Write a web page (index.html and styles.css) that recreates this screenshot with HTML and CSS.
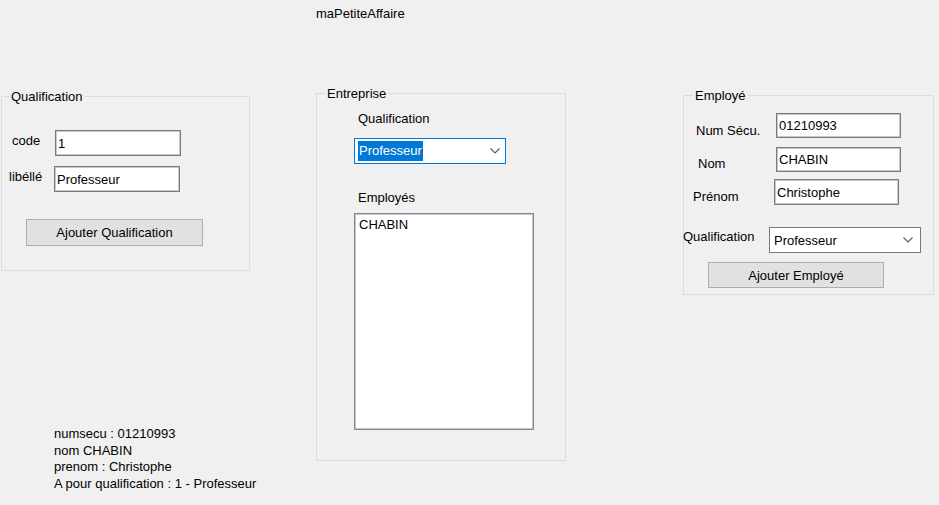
FILE: index.html
```html
<!DOCTYPE html>
<html lang="fr">
<head>
<meta charset="utf-8">
<title>maPetiteAffaire</title>
<link rel="stylesheet" href="styles.css">
</head>
<body>
<div class="form">
  <div class="title">maPetiteAffaire</div>
  <div class="main">
    <div class="col-left">
      <div class="group g1">
        <div class="legend">Qualification</div>
        <div class="row r1"><span class="lbl">code</span><div class="textbox">1</div></div>
        <div class="row r2"><span class="lbl">libéllé</span><div class="textbox">Professeur</div></div>
        <button class="btn">Ajouter Qualification</button>
      </div>
      <div class="info">numsecu : 01210993<br>nom CHABIN<br>prenom : Christophe<br>A pour qualification : 1 - Professeur</div>
    </div>

    <div class="group g2">
      <div class="legend">Entreprise</div>
      <div class="lbl-block lbl-qual">Qualification</div>
      <div class="combo combo-focus"><span class="sel">Professeur</span>
        <svg class="chev" width="10" height="6" viewBox="0 0 10 6"><polyline points="0.5,0.5 5,5 9.5,0.5" fill="none" stroke="#5f5f5f" stroke-width="1.2"/></svg>
      </div>
      <div class="lbl-block lbl-emp">Employés</div>
      <div class="listbox"><div class="item">CHABIN</div></div>
    </div>

    <div class="group g3">
      <div class="legend">Employé</div>
      <div class="row r1"><span class="lbl">Num Sécu.</span><div class="textbox">01210993</div></div>
      <div class="row r2"><span class="lbl">Nom</span><div class="textbox">CHABIN</div></div>
      <div class="row r3"><span class="lbl">Prénom</span><div class="textbox">Christophe</div></div>
      <div class="row r4"><span class="lbl">Qualification</span>
        <div class="combo"><span class="val">Professeur</span>
          <svg class="chev" width="10" height="6" viewBox="0 0 10 6"><polyline points="0.5,0.5 5,5 9.5,0.5" fill="none" stroke="#5f5f5f" stroke-width="1.2"/></svg>
        </div>
      </div>
      <button class="btn">Ajouter Employé</button>
    </div>
  </div>
</div>
</body>
</html>
```
FILE: styles.css
```css
* { box-sizing: border-box; }

body {
  margin: 0;
  width: 939px;
  height: 505px;
  overflow: hidden;
  background: #f0f0f0;
  font-family: "Liberation Sans", Arial, sans-serif;
  font-size: 13px;
  line-height: 15px;
  color: #000;
}

.title { padding: 6px 0 0 316px; height: 21px; }

.main {
  display: flex;
  align-items: flex-start;
  margin-top: 72px;
}

.col-left {
  flex: none;
  width: 250px;
  padding-left: 1px;
  margin-top: 3px;
}

.group {
  flex: none;
  border: 1px solid #dcdcdc;
}

.legend {
  margin-top: -8px;
  padding: 0 2px;
  width: max-content;
  background: #f0f0f0;
}

.row { display: flex; align-items: flex-start; }
.lbl { flex: none; white-space: nowrap; }

.textbox {
  flex: none;
  display: flex;
  align-items: center;
  background: #fff;
  border: 1px solid #7a7a7a;
  box-shadow: inset 0 0 0 1px #c9c9c9;
  padding-left: 2px;
  white-space: nowrap;
}

.btn {
  display: block;
  padding: 0;
  font: inherit;
  color: #000;
  background: #e1e1e1;
  border: 1px solid #adadad;
}

.combo {
  flex: none;
  display: flex;
  align-items: center;
  justify-content: space-between;
  width: 152px;
  height: 26px;
  padding: 0 7px 0 3px;
  background: #fff;
  border: 1px solid #7a7a7a;
}
.combo-focus { border-color: #0078d7; padding-right: 5px; }
.sel { background: #0078d7; color: #fff; line-height: 20px; padding: 0 1px; }
.val { padding-left: 1px; }
.chev { display: block; }

/* Qualification group */
.g1 { width: 249px; height: 175px; }
.g1 .legend { margin-left: 7px; }
.g1 .textbox { width: 126px; height: 26px; }
.g1 .lbl { margin-top: 3px; }
.g1 .r1 { margin-top: 26px; padding-left: 10px; }
.g1 .r1 .lbl { width: 43px; }
.g1 .r2 { margin-top: 10px; padding-left: 7px; }
.g1 .r2 .lbl { width: 45px; }
.g1 .btn { margin: 27px 0 0 24px; width: 177px; height: 27px; }

.info {
  margin: 155px 0 0 53px;
  line-height: 16.7px;
  white-space: nowrap;
}

/* Entreprise group */
.g2 { width: 250px; height: 368px; margin-left: 66px; }
.g2 .legend { margin-left: 8px; }
.lbl-block { margin-left: 41px; }
.lbl-qual { margin-top: 10px; }
.g2 .combo { margin: 12px 0 0 37px; }
.lbl-emp { margin-top: 26px; }
.listbox {
  margin: 8px 0 0 37px;
  width: 180px;
  height: 217px;
  background: #fff;
  border: 1px solid #828790;
  box-shadow: inset 0 0 0 1px #c4c7cc;
  padding: 3px 0 0 4px;
}

/* Employé group */
.g3 { width: 251px; height: 200px; margin: 2px 0 0 117px; }
.g3 .legend { margin-left: 9px; }
.g3 .textbox { width: 125px; height: 25px; }
.g3 .r1 { margin-top: 10px; padding-left: 12px; }
.g3 .r1 .lbl { width: 80px; margin-top: 10px; }
.g3 .r2 { margin-top: 9px; padding-left: 14px; }
.g3 .r2 .lbl { width: 78px; margin-top: 9px; }
.g3 .r3 { margin-top: 7px; padding-left: 9px; }
.g3 .r3 .lbl { width: 81px; margin-top: 10px; }
.g3 .r3 .textbox { height: 26px; }
.g3 .r4 { margin-top: 22px; }
.g3 .r4 .lbl { width: 86px; margin: 2px 0 0 -1px; }
.g3 .btn { margin: 9px 0 0 24px; width: 176px; height: 26px; }
```
